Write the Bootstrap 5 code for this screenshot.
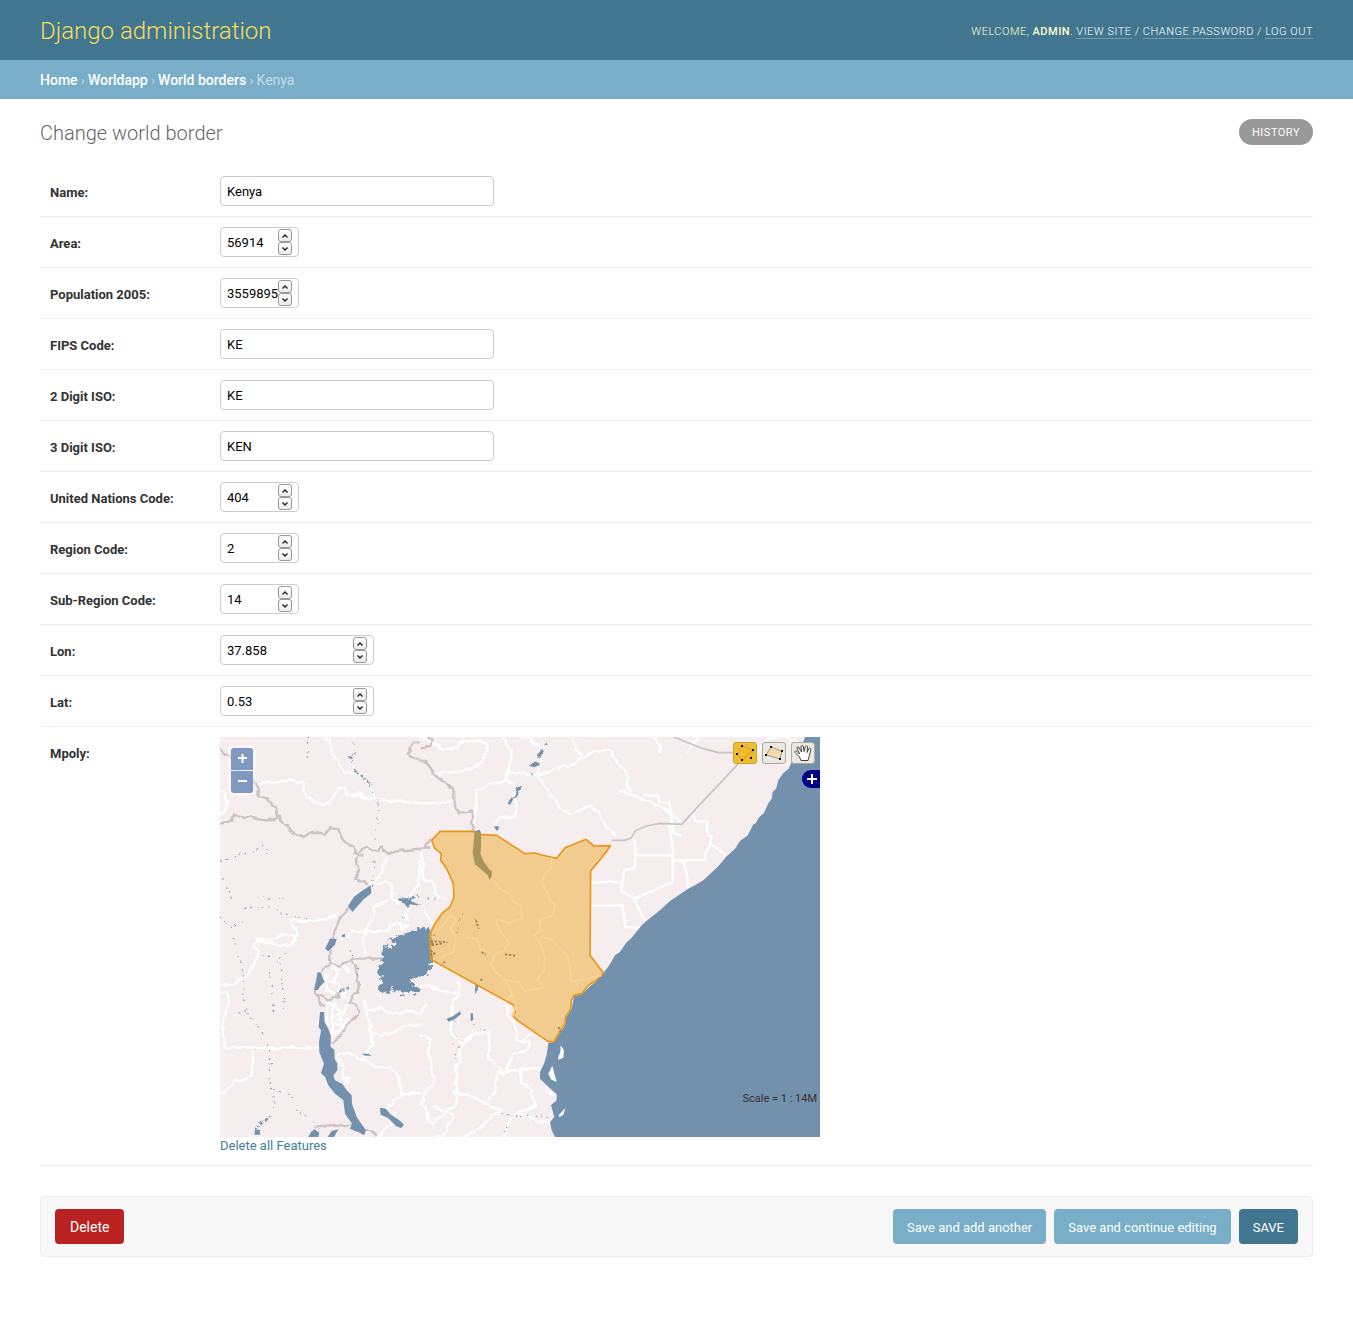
<!DOCTYPE html>
<html lang="en">
<head>
<meta charset="utf-8">
<meta name="viewport" content="width=device-width, initial-scale=1">
<title>Change world border | Django administration</title>
<link rel="stylesheet" href="https://cdn.jsdelivr.net/npm/bootstrap@5.3.0/dist/css/bootstrap.min.css">
<style>
  body { font-family: Roboto, "Liberation Sans", sans-serif; font-size: 13px; line-height: 18px; color: #333; }
  a { text-decoration: none; }
  .site-header { background: #417690; min-height: 60px; padding: 11px 40px 9px; color: #ffc; }
  .site-name { font-size: 24px; line-height: 30px; font-weight: 300; }
  .site-name a { color: #f5dd5d; }
  .user-tools { padding-top: 2px; font-size: 11px; line-height: 14px; font-weight: 300; letter-spacing: .5px; }
  .user-tools strong { font-weight: 500; }
  .user-tools a { color: #fff; border-bottom: 1px solid rgba(255,255,255,.25); }
  .crumbs { background: #79aec8; padding: 11px 40px 9px; font-size: 14px; line-height: 19px; color: #c4dce8; }
  .crumbs a { color: #fff; font-weight: 500; }
  .crumbs span { font-size: 13px; line-height: 1; }
  .page-body { padding: 20px 40px; }
  .page-title { padding-top: 1px; font-size: 20px; line-height: 26px; font-weight: 300; color: #666; }
  .history-link { background: #999; color: #fff; font-size: 11px; line-height: 14px; letter-spacing: .5px; padding: 7px 13px 5px; }
  .field-row { padding: 10px; border-bottom: 1px solid #eee; }
  .field-name { width: 170px; padding-top: 8px; font-size: 13px; line-height: 18px; font-weight: 700; color: #333; }
  .form-control { height: 30px; padding: 5px 6px; border-color: #ccc; border-radius: 4px; font-size: 13px; line-height: 18px; color: #000; }
  .text-field { width: 274px; }
  .int-field { width: 79px; }
  .float-field { width: 154px; }
  input[type=number] { padding-right: 18px; appearance: textfield; -moz-appearance: textfield; }
  input[type=number]::-webkit-inner-spin-button { appearance: none; -webkit-appearance: none; margin: 0; }
  .stepper { right: 7px; top: 2px; }
  .stepper button { width: 14px; height: 13px; padding: 0; border: 1px solid #999; border-radius: 3px; background: linear-gradient(#fff, #ececec); line-height: 1; }
  .stepper svg { display: block; margin: 0 auto; width: 8px; height: 8px; fill: none; stroke: #222; stroke-width: 1.4; }
  .map-box { width: 600px; max-width: 100%; }
  .map-box > svg { display: block; width: 100%; height: 400px; }
  .zoom-pad { left: 8px; top: 8px; padding: 3px; gap: 1px; border-radius: 4px; background: rgba(255,255,255,.4); }
  .zoom-pad button { width: 22px; height: 22px; padding: 0; border: 0; background: #7f99c1; }
  .zoom-pad button:first-child { border-radius: 3px 3px 0 0; }
  .zoom-pad button:last-child { border-radius: 0 0 3px 3px; }
  .zoom-pad svg, .map-tools svg, .layer-tab svg { display: block; }
  .map-tools { right: 5px; top: 5px; gap: 5px; }
  .map-tools button { width: 24px; height: 22px; padding: 0; border: 1px solid #aaa99a; border-radius: 3px; background: #ebe9e1; }
  .map-tools button.current { background: #f2bd2c; border-color: #c9a13a; }
  .layer-tab { right: 0; top: 33px; width: 18px; height: 18px; padding: 0; border: 0; border-radius: 9px 0 0 9px; background: #00008b; }
  .map-scale { right: 3px; bottom: 31px; font-size: 11px; line-height: 14px; color: #333; }
  .clear-link { color: #447e9b; line-height: 18px; }
  .actions-bar { margin-top: 30px; padding: 12px 14px; background: #f8f8f8; border: 1px solid #eee; border-radius: 4px; }
  .actions-bar .btn { height: 35px; padding: 2px 14px 0; border: 0; border-radius: 4px; font-size: 13px; color: #fff; background: #79aec8; }
  .actions-bar .btn-remove { padding: 2px 15px 0; background: #ba2121; font-size: 14px; }
  .actions-bar .btn-main { background: #417690; }
</style>
<script src="https://cdn.jsdelivr.net/npm/bootstrap@5.3.0/dist/js/bootstrap.bundle.min.js"></script>
</head>
<body>
<svg width="0" height="0" class="position-absolute" aria-hidden="true">
  <symbol id="up" viewBox="0 0 8 8"><path d="M1.500 5.500L4 3l2.500 2.500"/></symbol>
  <symbol id="down" viewBox="0 0 8 8"><path d="M1.500 2.500L4 5l2.500-2.500"/></symbol>
</svg>

<header class="site-header d-flex flex-wrap justify-content-between align-items-center">
  <h1 class="site-name mb-0"><a href="#">Django administration</a></h1>
  <div class="user-tools text-uppercase">Welcome, <strong>admin</strong>. <a href="#">View site</a> / <a href="#">Change password</a> / <a href="#">Log out</a></div>
</header>
<nav class="crumbs"><a href="#">Home</a><span> › </span><a href="#">Worldapp</a><span> › </span><a href="#">World borders</a><span> › </span>Kenya</nav>

<main class="page-body">
  <div class="d-flex justify-content-between align-items-start mb-3 pb-1">
    <h2 class="page-title mb-0">Change world border</h2>
    <a href="#" class="history-link text-uppercase rounded-pill">History</a>
  </div>

  <form>
    <div class="field-row d-flex"><label class="field-name" for="name">Name:</label><input class="form-control text-field" id="name" type="text" value="Kenya"></div>
    <div class="field-row d-flex"><label class="field-name" for="area">Area:</label><div class="position-relative int-field"><input class="form-control" id="area" type="number" value="56914"><div class="stepper position-absolute d-flex flex-column"><button type="button"><svg><use href="#up"/></svg></button><button type="button"><svg><use href="#down"/></svg></button></div></div></div>
    <div class="field-row d-flex"><label class="field-name" for="pop">Population 2005:</label><div class="position-relative int-field"><input class="form-control" id="pop" type="number" value="35598952"><div class="stepper position-absolute d-flex flex-column"><button type="button"><svg><use href="#up"/></svg></button><button type="button"><svg><use href="#down"/></svg></button></div></div></div>
    <div class="field-row d-flex"><label class="field-name" for="fips">FIPS Code:</label><input class="form-control text-field" id="fips" type="text" value="KE"></div>
    <div class="field-row d-flex"><label class="field-name" for="iso2">2 Digit ISO:</label><input class="form-control text-field" id="iso2" type="text" value="KE"></div>
    <div class="field-row d-flex"><label class="field-name" for="iso3">3 Digit ISO:</label><input class="form-control text-field" id="iso3" type="text" value="KEN"></div>
    <div class="field-row d-flex"><label class="field-name" for="un">United Nations Code:</label><div class="position-relative int-field"><input class="form-control" id="un" type="number" value="404"><div class="stepper position-absolute d-flex flex-column"><button type="button"><svg><use href="#up"/></svg></button><button type="button"><svg><use href="#down"/></svg></button></div></div></div>
    <div class="field-row d-flex"><label class="field-name" for="region">Region Code:</label><div class="position-relative int-field"><input class="form-control" id="region" type="number" value="2"><div class="stepper position-absolute d-flex flex-column"><button type="button"><svg><use href="#up"/></svg></button><button type="button"><svg><use href="#down"/></svg></button></div></div></div>
    <div class="field-row d-flex"><label class="field-name" for="subregion">Sub-Region Code:</label><div class="position-relative int-field"><input class="form-control" id="subregion" type="number" value="14"><div class="stepper position-absolute d-flex flex-column"><button type="button"><svg><use href="#up"/></svg></button><button type="button"><svg><use href="#down"/></svg></button></div></div></div>
    <div class="field-row d-flex"><label class="field-name" for="lon">Lon:</label><div class="position-relative float-field"><input class="form-control" id="lon" type="number" step="any" value="37.858"><div class="stepper position-absolute d-flex flex-column"><button type="button"><svg><use href="#up"/></svg></button><button type="button"><svg><use href="#down"/></svg></button></div></div></div>
    <div class="field-row d-flex"><label class="field-name" for="lat">Lat:</label><div class="position-relative float-field"><input class="form-control" id="lat" type="number" step="any" value="0.53"><div class="stepper position-absolute d-flex flex-column"><button type="button"><svg><use href="#up"/></svg></button><button type="button"><svg><use href="#down"/></svg></button></div></div></div>

    <div class="field-row d-flex">
      <div class="field-name flex-shrink-0">Mpoly:</div>
      <div>
        <div class="map-box position-relative overflow-hidden">
          <svg viewBox="0 0 1800 1200" preserveAspectRatio="xMidYMid slice" fill="none" stroke-linejoin="round">
            <defs>
              <filter id="ragged" x="-10%" y="-10%" width="120%" height="120%"><feTurbulence type="fractalNoise" baseFrequency=".07" numOctaves="3" seed="4"/><feDisplacementMap in="SourceGraphic" scale="32" xChannelSelector="R" yChannelSelector="G"/></filter>
              <filter id="wavy" filterUnits="userSpaceOnUse" x="0" y="0" width="1800" height="1200"><feTurbulence type="fractalNoise" baseFrequency=".04" numOctaves="2" seed="7"/><feDisplacementMap in="SourceGraphic" scale="16" xChannelSelector="R" yChannelSelector="G"/></filter>
            </defs>
            <path fill="#f5edee" d="M0 0h1800v1200H0z"/>
            <!-- province borders -->
            <g stroke="#fff" stroke-width="7" filter="url(#wavy)">
              <path d="M310 0l20 15 8 45 15 8 20 42h40l25 20 15 25 10 32 30 4 110 7"/>
              <path d="M110 143l60-8 50-4 35 5-5 28 15 18 25 18h40l20-45 25-3 5 22 28 2 8-12 12 18 40 5"/>
              <path d="M0 155l15 8 8 45-12 22-11 5M500 358l-12 50-35 32 45-5 20 15-5 30 20 20 45-30 20-28V370M500 490l-40 20 3 25-20 35-10 30M205 558l10-10 30 5 70-5 40-20M215 560l12 15 3 25-40-10-35 20-40-5-15 20 15 20-15 40-22 35-30 15-5 10-40-5"/>
              <path d="M385 600l10-20 60 2 60 3M510 580l3-18 25-8 5 25 20-15-5-45M605 345l5 80 35 20 5 35 30 8M610 520l30 40"/>
              <path d="M605 0l35 15 25 20 45-2 10-15 60-12 25 20-15 45-25 15-20 15-85 8-25 10M600 198l60 2 45-12"/>
              <path d="M845 0l30 35-10 70-10 28-50 8-35 22-7 100M855 133l30 8-5 15 8 40-5 42-45 2-10 20 3 15M865 105l45 5 45 8 45-20 45-10 30-18 55-30 40 0 20 35 35 40-5 30 15 20M1055 0l12 35 20 20M955 118l20 28 25 40 20 30 35 14 60-25 20 22 20 35 30 35M900 0h30l5 15 30 20-5 50-5 30"/>
              <path d="M1200 165l40 10 50 20 50 25 45 35M1300 0l20 30-5 18M1400 45l35-45M1580 75l30-25 30-40 40-15 60 20M1640 65l60 20"/>
              <path d="M0 765h20l8 30-15 45-7 30 10 62H300M100 940l-5 75-25 15-30 5-15 20-25 15M110 610l30 5 30 10 45 0 15-20M430 600l5 50"/>
              <path d="M430 790l10 40 10 35 5 60-10 15-15 30M440 820l45-5 20 12 30 2 40-8 25 10 20-30M455 885l30 10 15-5 10 5 45-30 55-3M350 955l35-8 50 25 40 20h35l30 35 5 45 60-5M360 965l15 65 8-5-5 15M545 1075l-40 30-5 15M480 1200l10-20 30-25 5-30"/>
              <path d="M600 750l30-5 35 20h50M715 728l3 50-20 15-2 40-5 45 15 25 20 20 30-30 50-10 2 85 45 40 30-60 40-10 10-25-40 0-5-45-20-35-12-40 25-25M725 920l-5 15 1 40-15 15 5 65-5 50-70 55-10-5-10-40-15-15 40-70-10-60-8-25 12-40-35-10M700 1065l60 15 40 20 45 20-30 20-30 30-55 30M830 1010l-5 55-20 25M830 1010l40-10 90-5M900 1000l3 35 30 20 5 30 10 20-50 20 60 32 50-8M640 1105l60 35-25 50-30 10M895 1125l-30 30-15 45M935 890l-35 25"/>
              <path d="M335 690l20 20-15 20 20 15-10 25-30-10-5-40 15-5M340 700l30-10 20 15M320 795l20 10-5 40 25-15 5 40-30-15 5 35M345 800l25 30 20-40M350 850l30-5-10 30-35 20M380 760l-15 15 20 15M320 800v90l20 5M300 730l35 5"/>
            </g>
            <path stroke="#fff" stroke-width="7" d="M1270 175h45l3 20 30 2 12 90 25 10M1415 225l15 28 30 0 3 40 12 5-5 25-15 30 0 15-95 4M1470 320l50 35M1348 260l10 70v105l-115 50-40-25 10-60 32-8v-75l-8-20M1248 355h110M1390 375l10 35 5 40M1112 438l60-5 38 5M1112 506h90M1200 500l8 10 8 60 45 3M1240 485l35 65"/>
            <!-- national borders -->
            <g stroke="#cdc2c6" stroke-width="7" filter="url(#wavy)">
              <path d="M0 35l35 30 20 40 45 25 13 12 0 35 30 10 15 15 12 5v30l20 20 20 20 25 20 15 3 25-15 20 0 15 8 20-20 20 3 15 25 25 25 10 2 8 22 22 7"/>
              <path d="M0 260l35-8 8-18 30 5 65 12 30-8 15-5M400 350l12-5 30-12 30 8 12-10 20 20 25-8 70-8 35-6M418 350l-8 20 5 22-8 35 40 15M390 505l-12 22-20 20-15 40-10 20-3 65"/>
              <path d="M600 15l-22 5-15 35 20 12 35 2M620 0l18 10-5 15-30 10M600 340l35-35M600 70l20 5 25 38 45 30 10 15 0 25 10 30 10 14 35-3 3 40 2 20"/>
              <path d="M485 665l-80 0-20 5-25 20-30-12-25 25M390 670l15 15 12 60-5 20-15 8-12 25 25 5 8 20-38 45-20 30-25 18M285 755l0 20 10 5 5 20 12 8M285 780l20-8 20 15 25-5 5-15 15-10M280 1172l120-10M430 1180l25 3 12 17"/>
            </g>
            <path stroke="#cdc2c6" stroke-width="5" d="M1175 310l40 0 20-8 10-20 35-15 40-8 65 3 55-60 115-122M1360 0l90 35 45 12 50 0"/>
            <!-- ocean and lakes -->
            <g fill="#7391ad">
              <path d="M1755 0L1745 30 1735 38 1733 50 1715 75 1706 95 1690 108 1675 130 1668 155 1658 165 1655 185 1644 200 1632 228 1618 240 1606 260 1600 262 1590 282 1582 296 1560 312 1545 335 1520 358 1495 388 1450 430 1430 442 1405 455 1350 492 1320 520 1290 543 1265 565 1235 602 1218 618 1200 645 1185 655 1168 685 1150 708 1127 735 1110 748 1085 772 1062 778 1055 815 1038 842 1034 868 1015 895 1003 915 985 918 980 955 972 980 960 1005 960 1025 980 1045 995 1058 1010 1072 1010 1090 993 1105 1003 1140 990 1155 995 1180 1005 1200H1800V0z"/>
              <path d="M452 445l2 24-23 18-18 20-16 18-13-18 18-28 20-15zM293 705l10 2 5 15 6 12-15 15-5 10-12 0 5-22zM330 605l20 0-5 18-20 20-10-8z"/>
              <path d="M300 825L312 825 314 855 325 875 332 895 332 930 343 938 344 965 352 980 352 1000 340 1015 345 1030 368 1042 380 1060 395 1075 396 1100 410 1140 425 1162 438 1180 432 1195 415 1185 405 1182 390 1175 396 1160 375 1130 370 1090 345 1070 325 1045 315 1020 303 1008 312 980 298 945 297 915 303 880 296 870z"/>
              <path d="M480 1112l18 3 12 16 30 20 12 12-8 10-15-5-25-25-22-10zM265 1200l8-15 10-8 15 10-3 13zM323 1200l12-18 20-5-13 23zM105 1178l15 0 0 15-17 0z"/>
              <path d="M680 845l20-8 20-14 3 8-18 15-20 8zM752 828l6 0 2 20-8 5zM766 745l8-3 0 15-9 14z"/>
              <path d="M764 283l15-5 4 10-2 65-18 0z"/>
              <path d="M822 268l14 0 0 8-6 6zM932 110l5-2 2 10zM972 25l8-8 3 6z"/>
              <path d="M425 950l20 0 10 6-20 0zM365 595l10-5 0 10h-8z"/>
            </g>
            <g fill="#7391ad" filter="url(#wavy)">
              <path d="M955 43l8-4 4 10-7 12-6-4zM930 84l14-10 14 0-4 8-20 8zM890 152l14-4-2 10-8 4-4 14-8 4-10 22-6-4 8-16 8-6 6-14z"/>
              <path d="M530 492l20-6-10-8 25 10 20-12-10 16 30 14-35-4-10 12-5-14z"/>
            </g>
            <g filter="url(#ragged)"><path fill="#7391ad" d="M492 625l28-22 55-20 50-16 10 24 0 30 0 50-10 40-40 10-10 18 30 20-20 16-25-10-25 5-20-15-25 15-12-12 6-30-8-40 14-30z"/><path fill="#f5edee" d="M505 614l20-3-5 18-22 0zM570 727l35 0 5 6-42 6z"/></g>
            <path fill="#fff" d="M1022 925l10 15-2 22-16 6 2-12 5-10zM985 1010l12-24 5 20 8 28-16-6zM1016 1135l20-22-6 20-12 8zM975 1060l30 8-10 10z"/>
            <!-- rivers and small pools -->
            <g stroke="#71859b" stroke-width="3" stroke-dasharray="4 14 5 23 3 9" filter="url(#wavy)">
              <path d="M392 0l15 30-15 35 12 35 35 30 15 30 22 45-3 45-12 60M385 60l20-10M400 92l55 50M0 370l40-10 70-20 25-20 5 30M0 410l35 75M70 515l90-5 30 20 70 15M130 480l60 10M0 540l30 30 35-15M265 0v70M462 370l-4 80"/>
              <path d="M40 600l15 60 15 50-2 70 20 60 45 50 20 65-6 60 15 85-15 45M130 650l50 30 15 150M160 825l-10-130 60-60M160 1060l50 10 20 50 50 35M55 825l30-5M390 640l25 60-10 40M550 540l20 40M620 483l35 0M620 34l45 2M765 545l8 35M725 530l-20 75M700 850l15 80-10 40M740 855l65 30M845 1132l160 10M850 1185l30-40M680 925l40-10"/>
            </g>
            <g stroke="#7391ad" stroke-width="7" stroke-dasharray="8 5 3 6" filter="url(#wavy)"><path d="M105 1180l15-20 36-24M358 762l25-8M405 98l50 45M535 492l60-14M388 60l10 6"/></g>
            <!-- selected feature -->
            <path fill="#e90" fill-opacity=".4" stroke="#e5981c" stroke-width="5" d="M635 310L660 283 764 283 770 292 830 295 915 350 945 348 965 354 1010 364 1035 332 1098 307 1122 327 1171 326 1155 350 1112 402 1110 655 1150 708 1127 732 1112 740 1105 745 1085 770 1062 775 1054 790 1052 815 1037 840 1035 860 1015 890 1003 913 985 914 892 850 878 835 886 825 882 805 632 667 630 590 645 560 665 530 690 510 702 480 700 440 680 395 662 370 664 350 645 335z"/>
            <g stroke="#f5d594" stroke-width="6">
              <path d="M820 430l20 25 35 20 5 20 22 8 5 40-40 15-40-12 10 30 30 40-15 25-25 10-15 30 15 25 20 15 20 25 15 40 5 22-10 30M995 362l-2 30-20 20-8 25 20 35 5 20 15 10-5 30-40 20v30l-20 15 20 20 15 45-3 40-20 25 20 25-60 10-15-25-45-10M960 600l30 5 35 35 20 20 10 75 90-20M650 580l20-15 20-30 20 15-18 25 15 25-5 45-35 15M740 600l30 5 10 30 30 15"/>
            </g>
            <path fill="#a8955c" d="M764 286h16l3 10 0 35-3 18 12 26 18 25 6 1-1 18-7 10-5-14-20-18-18-15-7-35z"/>
            <path stroke="#8e8358" stroke-width="5" stroke-dasharray="7 5" d="M632 612l50 4M635 625l35-6M632 640l14 12M768 550l8 25M785 645l12 8M855 652l30 4M670 676l5 0M785 725l-2 10M1015 870l8 15M630 655l12-8"/>
          </svg>

          <div class="zoom-pad position-absolute d-flex flex-column">
            <button type="button" title="Zoom in"><svg width="22" height="22" stroke="#fff" stroke-width="2"><path d="M7 10h9M11.500 6v9"/></svg></button>
            <button type="button" title="Zoom out"><svg width="22" height="22" stroke="#fff" stroke-width="2"><path d="M7 10h9"/></svg></button>
          </div>
          <div class="map-tools position-absolute d-flex">
            <button type="button" class="current" title="Modify"><svg width="22" height="20" fill="none"><path stroke="#d0a840" d="M3 11l5-8 11 4-2 8"/><path stroke="#f08020" d="M3 11l5 6L19 7"/><path fill="#000" d="M2 10h2v2H2zM7 2h2v2H7zM18 6h2v2h-2zM16 14h2v2h-2zM7 16h2v2H7z"/></svg></button>
            <button type="button" title="Draw polygon"><svg width="22" height="20"><path fill="#f0dca6" stroke="#999" d="M8 4l11 4-2 8-14-4z"/><path fill="#000" d="M7 3h2v2H7zM18 7h2v2h-2zM16 15h2v2h-2zM2 11h2v2H2z"/></svg></button>
            <button type="button" title="Pan"><svg width="22" height="20"><path fill="#fff" stroke="#44443e" d="M9 17.500L7.500 14 3 9.500C2.500 8 4 7.500 5 8.500L7.500 11 5 5c0-1.500 1.800-1.500 2.200 0L9.500 9 9 3.500c.3-1.500 2-1.300 2.300 0L12 8.500l1.500-5c.7-1.200 2-.7 2 .6L15 9.500l2-4c1-1 2-.2 1.700 1L17.500 12 16 17.500z"/></svg></button>
          </div>
          <button type="button" class="layer-tab position-absolute" title="Layers"><svg width="18" height="18" stroke="#fff" stroke-width="2"><path d="M5 9h10M10 4v10"/></svg></button>
          <div class="map-scale position-absolute">Scale = 1 : 14M</div>
        </div>
        <a href="#" class="clear-link">Delete all Features</a>
      </div>
    </div>

    <div class="actions-bar d-flex flex-wrap gap-2">
      <button type="button" class="btn btn-remove me-auto">Delete</button>
      <button type="submit" class="btn">Save and add another</button>
      <button type="submit" class="btn">Save and continue editing</button>
      <button type="submit" class="btn btn-main text-uppercase">Save</button>
    </div>
  </form>
</main>
</body>
</html>
